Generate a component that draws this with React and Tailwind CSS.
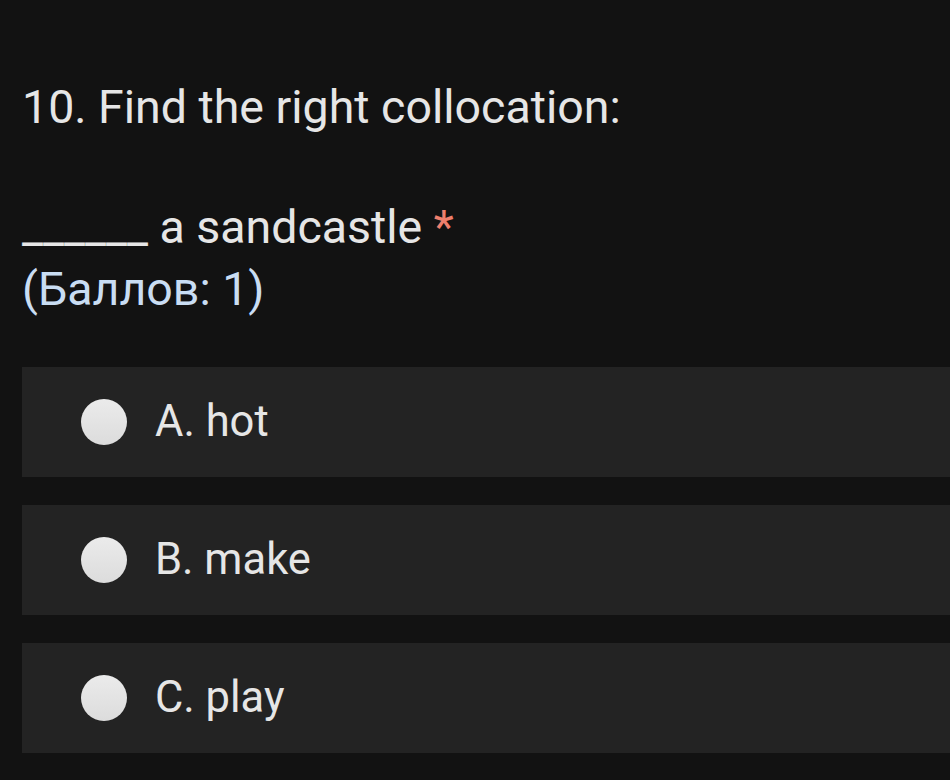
export default function App() {
  const options = ["A. hot", "B. make", "C. play"]

  return (
    <div className="min-h-[780px] w-[950px] overflow-hidden bg-[#121212] font-['Roboto',sans-serif] text-[#e6e6e6]">
      <div className="pt-[80px] pl-[22px]">
        <h1 className="text-[46.5px] leading-[54px] font-normal">10. Find the right collocation:</h1>
        <p className="mt-[66px] text-[46.5px] leading-[54px]">
          ______ a sandcastle <span className="text-[#ee7f6d]">*</span>
        </p>
        <p className="mt-[8px] text-[46.5px] leading-[54px] text-[#c9ddf3]">(Баллов: 1)</p>
      </div>

      <div className="mt-[51px] ml-[22px] flex flex-col gap-[28px]">
        {options.map((opt) => (
          <div key={opt} className="flex h-[110px] items-center bg-[#232323] pl-[59px]">
            <span className="h-[46px] w-[46px] rounded-full bg-gradient-to-b from-[#ebebeb] to-[#dcdcdc]" />
            <span className="ml-[28px] text-[43.5px] leading-[50px]">{opt}</span>
          </div>
        ))}
      </div>
    </div>
  )
}
